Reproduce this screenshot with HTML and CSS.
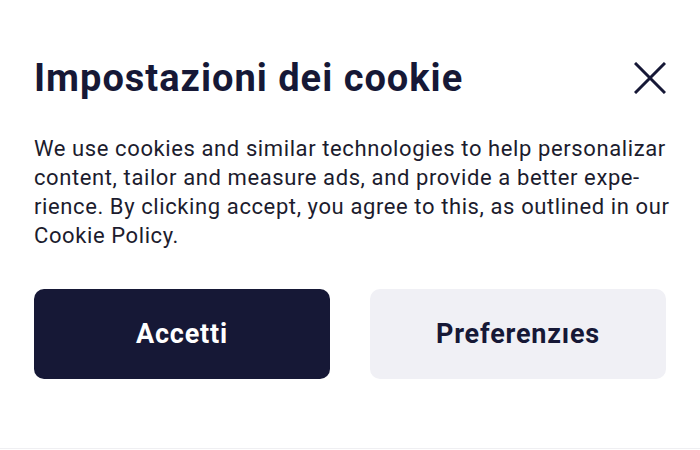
FILE: index.html
```html
<!DOCTYPE html>
<html lang="it">
<head>
<meta charset="utf-8">
<title>Impostazioni dei cookie</title>
<link rel="stylesheet" href="styles.css">
</head>
<body>
<div class="sheet">
  <div class="header">
    <h1 class="title">Impostazioni dei cookie</h1>
    <button class="close" aria-label="Chiudi">
      <svg width="32" height="32" viewBox="0 0 32 32" fill="none" stroke="#161836" stroke-width="3" stroke-linecap="butt">
        <path d="M1 1 L31 31 M31 1 L1 31"/>
      </svg>
    </button>
  </div>
  <p class="text">We use cookies and similar technologies to help personalizar<br>content, tailor and measure ads, and provide a better expe-<br>rience. By clicking accept, you agree to this, as outlined in our<br>Cookie Policy.</p>
  <div class="actions">
    <button class="btn btn-primary">Accetti</button>
    <button class="btn btn-secondary">Preferenzıes</button>
  </div>
</div>
</body>
</html>
```

FILE: styles.css
```css
html, body {
  margin: 0;
  padding: 0;
  background: #ffffff;
}
body {
  font-family: Roboto, "Liberation Sans", sans-serif;
  color: #161836;
  width: 700px;
  height: 450px;
  overflow: hidden;
}
.sheet {
  box-sizing: border-box;
  height: 449px;
  border-bottom: 1px solid #efeff2;
  padding: 56px 34px 0 34px;
}
.header {
  display: flex;
  align-items: center;
  justify-content: space-between;
}
.title {
  margin: 0;
  font-size: 38px;
  line-height: 44px;
  font-weight: 700;
  letter-spacing: 1px;
  color: #161836;
}
.close {
  display: flex;
  padding: 0;
  margin: 0;
  border: 0;
  background: none;
}
.text {
  margin: 34px -30px 0 0;
  font-size: 22px;
  line-height: 29px;
  letter-spacing: 0.6px;
  white-space: nowrap;
  color: #1c1c2e;
}
.actions {
  display: grid;
  grid-template-columns: 1fr 1fr;
  gap: 40px;
  margin-top: 39px;
}
.btn {
  height: 90px;
  border: 0;
  border-radius: 10px;
  font-family: Roboto, "Liberation Sans", sans-serif;
  font-size: 27px;
  font-weight: 700;
  letter-spacing: 0.8px;
}
.btn-primary {
  background: #161836;
  color: #ffffff;
}
.btn-secondary {
  background: #f0f0f5;
  color: #161836;
}
```
